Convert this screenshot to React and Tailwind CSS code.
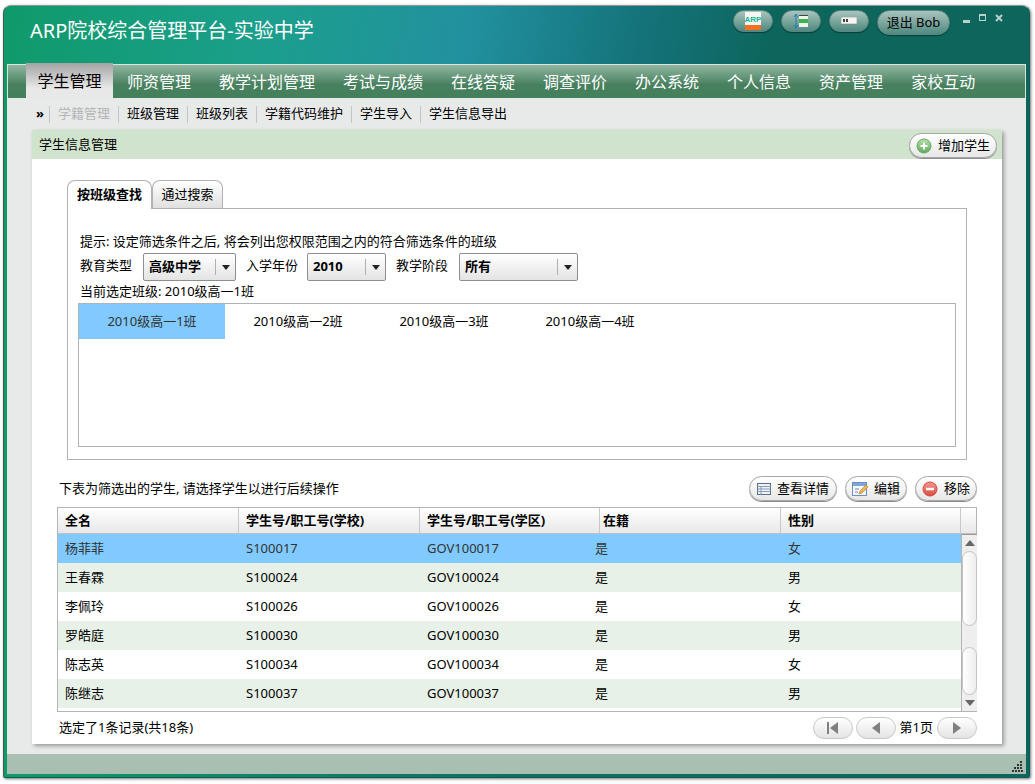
import React from "react";

const FONT = "font-['Noto_Sans','Noto_Sans_CJK_SC',sans-serif]";

const menus = ["师资管理", "教学计划管理", "考试与成绩", "在线答疑", "调查评价", "办公系统", "个人信息", "资产管理", "家校互动"];
const subMenus = ["班级管理", "班级列表", "学籍代码维护", "学生导入", "学生信息导出"];
const classes = ["2010级高一1班", "2010级高一2班", "2010级高一3班", "2010级高一4班"];
const students = [
  ["杨菲菲", "S100017", "GOV100017", "是", "女"],
  ["王春霖", "S100024", "GOV100024", "是", "男"],
  ["李佩玲", "S100026", "GOV100026", "是", "女"],
  ["罗皓庭", "S100030", "GOV100030", "是", "男"],
  ["陈志英", "S100034", "GOV100034", "是", "女"],
  ["陈继志", "S100037", "GOV100037", "是", "男"],
];

const TopPill = ({ children }) => (
  <div className="w-[40px] h-[22px] rounded-full border border-[#5d8682] bg-gradient-to-b from-[#a9c4bd] to-[#4e8a80] flex items-center justify-center shadow-[0_1px_1px_rgba(0,0,0,0.4)]">
    {children}
  </div>
);

const Pill = ({ children, className = "" }) => (
  <div className={`h-[25px] rounded-full border border-[#a6a6a6] bg-gradient-to-b from-white to-[#e6e8e6] flex items-center justify-center gap-[6px] text-[13px] text-black shadow-[0_1px_0_#8f8f8f] ${className}`}>
    {children}
  </div>
);

const Select = ({ label, className }) => (
  <div className={`h-[28px] rounded-[2px] border border-[#8e8e8e] bg-gradient-to-b from-white to-[#e4e4e4] flex items-center font-bold text-[13px] text-black pl-[5px] ${className}`}>
    <span className="flex-1">{label}</span>
    <span className="w-[20px] h-[16px] border-l border-[#b0b0b0] flex items-center justify-center">
      <span className="w-0 h-0 border-x-[4px] border-x-transparent border-t-[5px] border-t-[#222]" />
    </span>
  </div>
);

const RoundIcon = ({ from, to, mark }) => (
  <svg width="16" height="16" viewBox="0 0 16 16">
    <defs>
      <linearGradient id={mark + "g"} x1="0" y1="0" x2="0" y2="1">
        <stop offset="0" stopColor={from} />
        <stop offset="1" stopColor={to} />
      </linearGradient>
    </defs>
    <circle cx="8" cy="8" r="7" fill={`url(#${mark}g)`} stroke={to} />
    {mark === "plus" && <path d="M8 4.5v7M4.5 8h7" stroke="#fff" strokeWidth="2" />}
    {mark === "minus" && <path d="M4 8h8" stroke="#fff" strokeWidth="2.5" />}
  </svg>
);

const PageButton = ({ width = "w-[40px]", children }) => (
  <div className={`${width} h-[22px] rounded-full border border-[#c8c8c8] bg-gradient-to-b from-white to-[#e4e4e4] flex items-center justify-center`}>
    {children}
  </div>
);

const App = () => {
  return (
    <div className={`w-[1035px] h-[784px] bg-white pt-[5px] pl-[3px] ${FONT}`}>
      <div className="w-[1027px] h-[773px] rounded-t-[8px] rounded-b-[2px] border border-[#0c5c55] border-t-[#8f9a98] border-l-[#3c5f56] shadow-[1px_1px_3px_rgba(0,0,0,0.55)] bg-gradient-to-r from-[#109a68] via-[#0f6f62] to-[#0d655c] p-[3px] pt-0 flex flex-col">
        <header className="h-[58px] shrink-0 -mx-[3px] px-[26px] rounded-t-[8px] bg-[linear-gradient(100deg,#0f9a6a_0%,#1b9f8c_25%,#22919f_45%,#14737a_62%,#0d655c_75%,#0d655c_100%)] flex items-start">
          <h1 className="text-[20px] leading-[24px] mt-[13px] text-white flex-1 font-normal">ARP院校综合管理平台-实验中学</h1>
          <div className="flex items-start gap-[8px] mt-[4px]">
            <TopPill>
              <svg width="16" height="20" viewBox="0 0 16 20">
                <rect x="0" y="1" width="16" height="18" fill="#f5f5f5" />
                <rect x="0" y="14" width="16" height="5" fill="#f07020" />
                <text x="8" y="11" textAnchor="middle" fontSize="8" fontWeight="700" fill="#11b58c" fontFamily="Liberation Sans">ARP</text>
              </svg>
            </TopPill>
            <TopPill>
              <svg width="16" height="16" viewBox="0 0 16 16">
                <path d="M3 1v14M1 4l2-3 2 3M1 12l2 3 2-3" stroke="#1b7fb8" fill="none" />
                <rect x="6" y="2" width="9" height="12" fill="#f2f2f2" />
                <rect x="6" y="6" width="9" height="4" fill="#39b54a" />
                <rect x="6" y="2" width="9" height="1" fill="#444" />
              </svg>
            </TopPill>
            <TopPill>
              <svg width="16" height="8" viewBox="0 0 16 8">
                <rect width="16" height="7" fill="#f5f5f5" stroke="#777" strokeWidth="0.5" />
                <rect x="2" y="2" width="2" height="3" fill="#444" />
                <rect x="5" y="2" width="2" height="3" fill="#444" />
              </svg>
            </TopPill>
            <div className="w-[73px] h-[25px] rounded-full border border-[#5d8682] bg-gradient-to-b from-[#a9c4bd] to-[#4e8a80] flex items-center justify-center text-[13px] text-black shadow-[0_1px_1px_rgba(0,0,0,0.4)]">
              退出 Bob
            </div>
            <div className="flex gap-[9px] ml-[5px] mt-[4px] items-start w-[40px]">
              <span className="w-[7px] h-[3px] bg-[#b9cfc9] mt-[6px]" />
              <span className="w-[7px] h-[7px] border border-t-2 border-[#b9cfc9]" />
              <svg width="8" height="8" viewBox="0 0 8 8">
                <path d="M1 1l6 6M7 1l-6 6" stroke="#b9cfc9" strokeWidth="2" />
              </svg>
            </div>
          </div>
        </header>

        <div className="flex-1 min-h-0 bg-[#e8eaea] flex flex-col ml-[0px]">
          <nav className="h-[34px] shrink-0 border border-b-0 border-[#d8e4dc] bg-[linear-gradient(#90b6a2,#47805e_60%,#44805c)] flex items-stretch pl-[18px]">
            <div className="w-[87px] -mt-[2px] h-[36px] bg-[linear-gradient(#a3a3a3,#e8e8e8_70%,#e8e8e8)] flex items-center justify-center text-[16px] text-black">
              学生管理
            </div>
            {menus.map((m) => (
              <div key={m} className="px-[14px] flex items-center text-[16px] text-white">{m}</div>
            ))}
          </nav>

          <div className="h-[32px] shrink-0 pl-[29px] flex items-center text-[13px] text-black">
            <span className="w-[13px] text-[13px] font-bold">»</span>
            <span className="border-l border-[#c4c4c4] h-[17px] flex items-center px-[8px] text-[#b5b5b5]">学籍管理</span>
            {subMenus.map((m) => (
              <span key={m} className="border-l border-[#c4c4c4] h-[17px] flex items-center px-[8px]">{m}</span>
            ))}
          </div>

          <main className="w-[970px] h-[614px] ml-[25px] bg-white shadow-[2px_2px_4px_rgba(0,0,0,0.35)] flex flex-col">
            <div className="h-[29px] shrink-0 bg-[#d0e3cc] flex items-center justify-between pl-[7px] pr-[5px] text-[13px] text-black">
              <span>学生信息管理</span>
              <Pill className="w-[88px] mt-[2px]">
                <RoundIcon from="#b8e0a8" to="#62a860" mark="plus" />
                增加学生
              </Pill>
            </div>

            <section className="ml-[35px] mt-[20px] w-[900px]">
              <div className="flex items-end h-[29px] text-[13px] text-black">
                <div className="w-[85px] h-[29px] -mb-px relative bg-white border border-b-0 border-[#aeb4b6] rounded-t-[8px] flex items-center justify-center font-bold">按班级查找</div>
                <div className="w-[71px] h-[28px] bg-gradient-to-b from-white to-[#e0e0e0] border border-b-0 border-[#aeb4b6] rounded-t-[8px] flex items-center justify-center">通过搜索</div>
              </div>
              <div className="h-[252px] border border-[#aeb4b6] pl-[10px] pr-[10px] text-[13px] text-black">
                <p className="mt-[23px] leading-[18px] pl-[2px]">提示: 设定筛选条件之后, 将会列出您权限范围之内的符合筛选条件的班级</p>
                <div className="flex items-center mt-[3px] h-[28px] pl-[2px]">
                  <span className="w-[63px] -mt-[3px]">教育类型</span>
                  <Select label="高级中学" className="w-[93px]" />
                  <span className="w-[71px] pl-[10px] -mt-[3px]">入学年份</span>
                  <Select label="2010" className="w-[79px]" />
                  <span className="w-[73px] pl-[10px] -mt-[3px]">教学阶段</span>
                  <Select label="所有" className="w-[119px]" />
                </div>
                <p className="leading-[18px] mt-[1px] pl-[2px]">当前选定班级: 2010级高一1班</p>
                <div className="h-[144px] mt-[3px] border border-[#aeb4b6] flex items-start">
                  {classes.map((c, i) => (
                    <div key={c} className={`w-[146px] h-[35px] flex items-center justify-center ${i === 0 ? "bg-[#80caff] text-[#333]" : ""}`}>{c}</div>
                  ))}
                </div>
              </div>
            </section>

            <div className="h-[25px] mt-[16px] ml-[27px] mr-[25px] flex items-center text-[13px] text-black">
              <span className="flex-1">下表为筛选出的学生, 请选择学生以进行后续操作</span>
              <div className="flex gap-[8px]">
                <Pill className="w-[88px]">
                  <svg width="14" height="12" viewBox="0 0 14 12">
                    <rect x="0.5" y="0.5" width="13" height="11" fill="#eef2f8" stroke="#5a6f8c" />
                    <path d="M0.5 3.5h13M0.5 6h13M0.5 8.5h13M4 3.5v8" stroke="#8a9bb3" />
                  </svg>
                  查看详情
                </Pill>
                <Pill className="w-[62px]">
                  <svg width="16" height="16" viewBox="0 0 16 16">
                    <rect x="0.5" y="1.5" width="14" height="13" fill="#f4f7fc" stroke="#6f8fc0" />
                    <rect x="1" y="2" width="13" height="3" fill="#7ea6dc" />
                    <path d="M3 8h4M3 11h3" stroke="#7a8aa0" />
                    <path d="M7 13l1-3 6-6 2 2-6 6z" fill="#f2b84a" stroke="#b07a20" strokeWidth="0.6" />
                  </svg>
                  编辑
                </Pill>
                <Pill className="w-[62px]">
                  <RoundIcon from="#f59a90" to="#d84a40" mark="minus" />
                  移除
                </Pill>
              </div>
            </div>

            <div className="mt-[6px] ml-[25px] w-[920px] h-[206px] border border-[#b4b4b4] text-[13px] text-black flex flex-col">
              <div className="h-[26px] shrink-0 flex bg-gradient-to-b from-white to-[#e8e8e8] border-b border-[#c0c0c0] font-bold">
                <div className="w-[181px] pl-[7px] border-r border-[#c8c8c8] flex items-center">全名</div>
                <div className="w-[181px] pl-[7px] border-r border-[#c8c8c8] flex items-center">学生号/职工号(学校)</div>
                <div className="w-[180px] pl-[7px] border-r border-[#c8c8c8] flex items-center">学生号/职工号(学区)</div>
                <div className="w-[181px] pl-[3px] border-r border-[#c8c8c8] flex items-center">在籍</div>
                <div className="w-[180px] pl-[7px] border-r border-[#c8c8c8] flex items-center">性别</div>
              </div>
              <div className="flex flex-1 min-h-0">
                <div className="w-[903px]">
                  {students.map((s, i) => (
                    <div key={s[0]} className={`h-[29px] flex items-center ${i === 0 ? "bg-[#80caff] text-[#333]" : i % 2 === 1 ? "bg-[#e8f1e7]" : "bg-white"}`}>
                      <span className="w-[181px] pl-[7px]">{s[0]}</span>
                      <span className="w-[181px] pl-[7px]">{s[1]}</span>
                      <span className="w-[175px] pl-[7px]">{s[2]}</span>
                      <span className="w-[186px]">{s[3]}</span>
                      <span className="w-[180px] pl-[7px]">{s[4]}</span>
                    </div>
                  ))}
                </div>
                <div className="w-[16px] border-l border-[#b4b4b4] border-t border-t-[#999] bg-[#eeeeee] flex flex-col items-center">
                  <span className="h-[16px] flex items-center">
                    <span className="w-0 h-0 border-x-[5px] border-x-transparent border-b-[6px] border-b-[#666]" />
                  </span>
                  <div className="w-[15px] h-[75px] rounded-full border border-[#c4c4c4] bg-gradient-to-r from-white to-[#ededed]" />
                  <div className="flex-1" />
                  <div className="w-[15px] h-[48px] rounded-full border border-[#c4c4c4] bg-gradient-to-r from-white to-[#ededed]" />
                  <span className="h-[16px] flex items-center">
                    <span className="w-0 h-0 border-x-[5px] border-x-transparent border-t-[6px] border-t-[#666]" />
                  </span>
                </div>
              </div>
            </div>

            <div className="h-[32px] ml-[27px] mr-[25px] flex items-center justify-between text-[13px] text-black">
              <span>选定了1条记录(共18条)</span>
              <div className="flex items-center gap-[3px]">
                <PageButton>
                  <span className="w-[2px] h-[12px] bg-[#808080] mr-[1px]" />
                  <span className="w-0 h-0 border-y-[6px] border-y-transparent border-r-[8px] border-r-[#808080]" />
                </PageButton>
                <PageButton>
                  <span className="w-0 h-0 border-y-[6px] border-y-transparent border-r-[8px] border-r-[#808080]" />
                </PageButton>
                <span className="mx-[1px]">第1页</span>
                <PageButton>
                  <span className="w-0 h-0 border-y-[6px] border-y-transparent border-l-[8px] border-l-[#808080]" />
                </PageButton>
              </div>
            </div>
          </main>

          <div className="flex-1" />
          <footer className="h-[20px] shrink-0 bg-[#a9bfb1] flex items-end justify-end pr-[3px] pb-[2px]">
            <svg width="11" height="11" viewBox="0 0 11 11" fill="#333">
              <rect x="8" y="0" width="2" height="2" />
              <rect x="5" y="3" width="2" height="2" />
              <rect x="8" y="3" width="2" height="2" />
              <rect x="2" y="6" width="2" height="2" />
              <rect x="5" y="6" width="2" height="2" />
              <rect x="8" y="6" width="2" height="2" />
              <rect x="0" y="9" width="2" height="2" />
              <rect x="3" y="9" width="2" height="2" />
              <rect x="6" y="9" width="2" height="2" />
              <rect x="9" y="9" width="2" height="2" />
            </svg>
          </footer>
        </div>
      </div>
    </div>
  );
};

export default App;
